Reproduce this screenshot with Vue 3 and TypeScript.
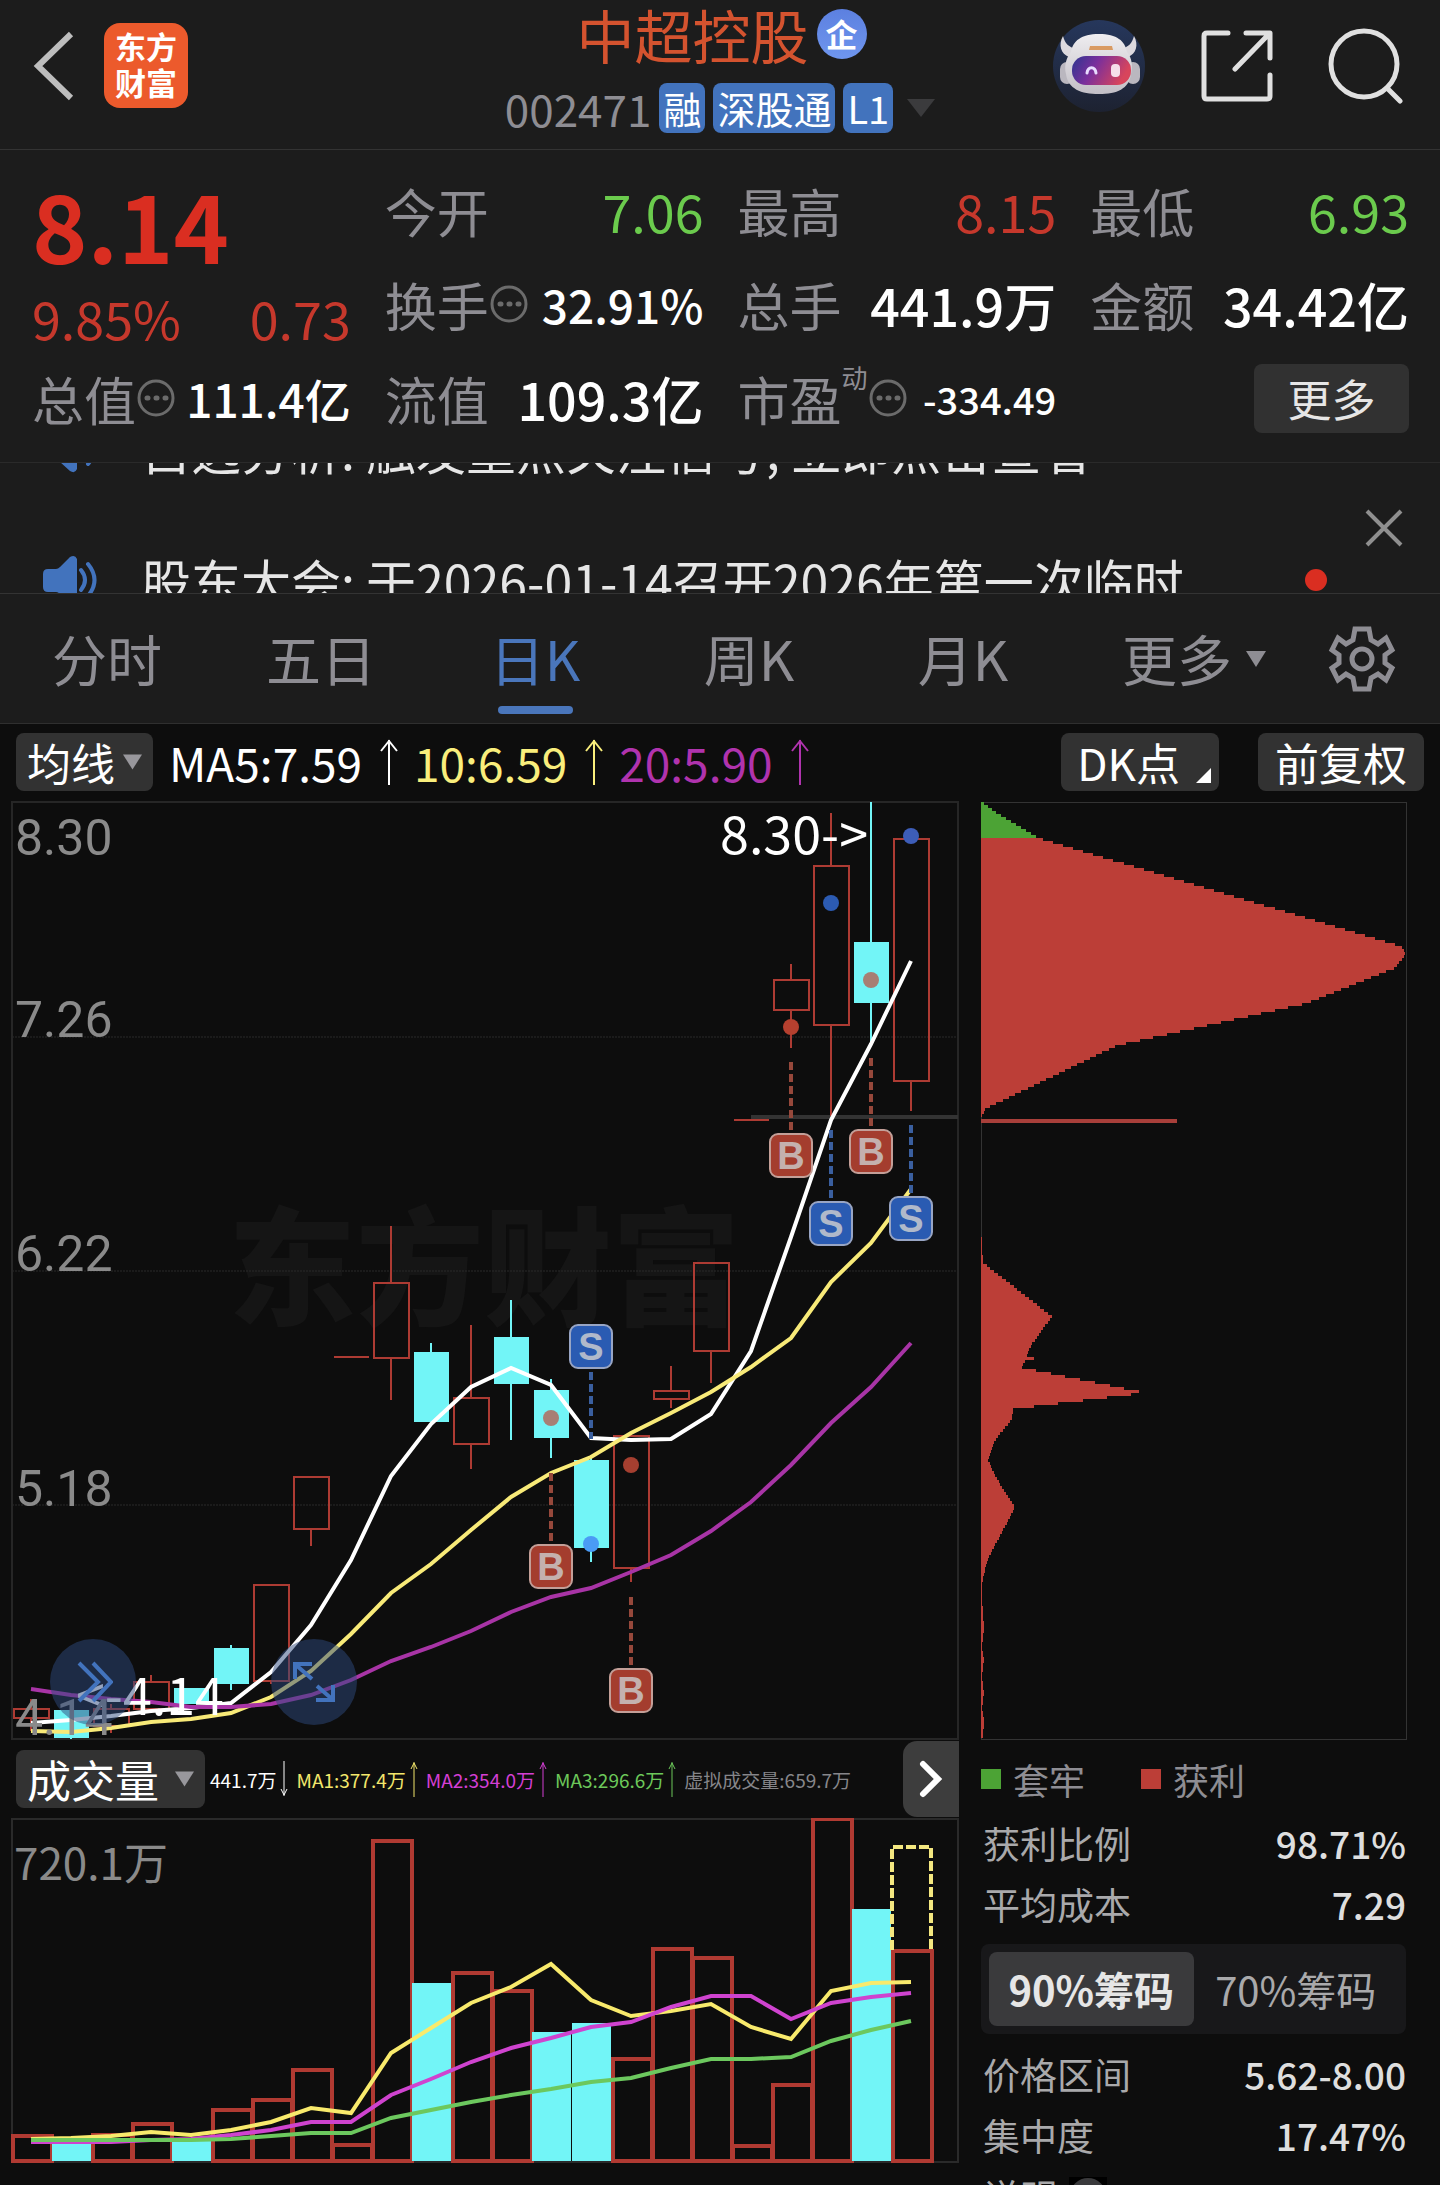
<script setup lang="ts">
import { ref } from 'vue'

interface Candle {
  up: boolean
  top: number
  bottom: number
  high: number
  low: number
}

interface Signal {
  kind: 'B' | 'S'
  index: number
  dot: number
  dotColor: string
  from: number
  to: number
  badge: number
}

const RED = '#ad3b33'
const CYAN = '#72f5f7'

const tabs = ['分时', '五日', '日K', '周K', '月K', '更多']
const activeTab = ref('日K')
const chipRange = ref('90%筹码')

const averages = [
  { text: 'MA5:7.59', color: '#ffffff' },
  { text: '10:6.59', color: '#f9ee7c' },
  { text: '20:5.90', color: '#b033ae' },
]

const volumeStats = [
  { text: '441.7万', color: '#ffffff', dir: 'down' },
  { text: 'MA1:377.4万', color: '#f3e76c', dir: 'up' },
  { text: 'MA2:354.0万', color: '#d43fd4', dir: 'up' },
  { text: 'MA3:296.6万', color: '#6cc85a', dir: 'up' },
  { text: '虚拟成交量:659.7万', color: '#86868a', dir: '' },
]

const costRows = [
  { label: '获利比例', value: '98.71%' },
  { label: '平均成本', value: '7.29' },
]
const rangeRows = [
  { label: '价格区间', value: '5.62-8.00' },
  { label: '集中度', value: '17.47%' },
]

const xAt = (i: number): number => 31 + i * 40

// up, body top, body bottom, high, low
const rawCandles: [number, number, number, number, number][] = [
  [1, 909, 918, 899, 931], [0, 910, 938, 910, 939], [1, 909, 926, 904, 933], [1, 882, 909, 875, 909],
  [0, 888, 904, 888, 904], [0, 848, 884, 845, 890], [1, 785, 881, 785, 884], [1, 677, 729, 677, 746],
  [1, 557, 557, 557, 557], [1, 483, 558, 426, 600], [0, 552, 622, 543, 622], [1, 598, 644, 525, 669],
  [0, 537, 584, 500, 640], [0, 590, 638, 579, 658], [0, 660, 748, 657, 762], [1, 636, 768, 636, 782],
  [1, 591, 599, 566, 608], [1, 463, 551, 463, 583], [1, 320, 320, 320, 320], [1, 180, 210, 164, 248],
  [1, 66, 225, 13, 316], [0, 142, 203, 2, 245], [1, 39, 281, 39, 311],
]
const candles: Candle[] = rawCandles.map(([up, top, bottom, high, low]) => ({ up: up === 1, top, bottom, high, low }))

const toPoints = (ys: number[]): string => ys.map((y, i) => `${xAt(i)},${y}`).join(' ')

const priceLines = [
  { color: '#ffffff', points: toPoints([923, 920, 916, 911, 908, 903, 872, 825, 760, 676, 624, 587, 568, 585, 638, 640, 639, 614, 551, 437, 320, 244, 161]) },
  { color: '#f8ea78', points: toPoints([931, 932, 928, 922, 919, 913, 897, 871, 834, 793, 764, 730, 697, 673, 657, 633, 613, 592, 567, 538, 482, 443, 389]) },
  { color: '#a834a6', points: toPoints([889, 895, 899, 902, 907, 907, 904, 895, 880, 861, 847, 831, 812, 797, 788, 772, 755, 731, 702, 665, 623, 587, 543]) },
]

const signals: Signal[] = [
  { kind: 'B', index: 13, dot: 618, dotColor: '#a77f74', from: 673, to: 741, badge: 744 },
  { kind: 'S', index: 14, dot: 744, dotColor: '#4a9bf5', from: 572, to: 639, badge: 524 },
  { kind: 'B', index: 15, dot: 665, dotColor: '#a53f30', from: 797, to: 865, badge: 868 },
  { kind: 'B', index: 19, dot: 227, dotColor: '#b5402f', from: 262, to: 330, badge: 333 },
  { kind: 'S', index: 20, dot: 103, dotColor: '#2c5bb2', from: 330, to: 398, badge: 401 },
  { kind: 'B', index: 21, dot: 180, dotColor: '#a77f74', from: 258, to: 326, badge: 329 },
  { kind: 'S', index: 22, dot: 36, dotColor: '#3d5db8', from: 325, to: 393, badge: 396 },
]

const axis = [
  { label: '8.30', y: 55 },
  { label: '7.26', y: 237 },
  { label: '6.22', y: 471 },
  { label: '5.18', y: 706 },
  { label: '4.14', y: 935 },
]

const volumeTops = [318, 325, 317, 306, 323, 292, 282, 252, 327, 23, 165, 155, 173, 214, 205, 241, 131, 140, 328, 267, 1, 91, 133]
const volumeFalls = [1, 4, 10, 13, 14, 21]
const volumes = volumeTops.map((top, i) => ({ top, up: !volumeFalls.includes(i), x: xAt(i) }))

const volumeLines = [
  { color: '#f8ea6c', points: toPoints([321, 320, 318, 314, 317, 312, 304, 290, 295, 235, 210, 185, 169, 146, 182, 198, 193, 186, 209, 221, 173, 165, 164]) },
  { color: '#cf43cf', points: toPoints([324, 324, 324, 322, 321, 317, 312, 304, 304, 277, 261, 244, 230, 220, 209, 204, 189, 178, 178, 201, 185, 179, 175]) },
  { color: '#6cc85e', points: toPoints([322, 322, 322, 322, 322, 321, 318, 315, 315, 300, 292, 284, 277, 271, 264, 260, 250, 241, 241, 239, 223, 212, 203]) },
]

// Chip distribution profile: [y, width]
const profile: [number, number][] = [
  [2, 2], [14, 18], [37, 57], [39, 62], [146, 421], [154, 424], [167, 415], [203, 325], [245, 136], [308, 5], [317, 0],
  [430, 0], [462, 2], [463, 3], [516, 71], [545, 50], [555, 46], [556, 53], [559, 53], [560, 44], [567, 41], [569, 50],
  [592, 163], [594, 150], [607, 45], [608, 32], [619, 31], [638, 15], [659, 7], [677, 15], [707, 34], [760, 6], [783, 1],
  [797, 1], [827, 3], [847, 1], [858, 3], [876, 1], [893, 3], [908, 1], [920, 3], [939, 2],
]
const widthAt = (y: number): number => {
  for (let i = 1; i < profile.length; i++) {
    const [y0, w0] = profile[i - 1]
    const [y1, w1] = profile[i]
    if (y <= y1) return w0 + ((w1 - w0) * (y - y0)) / (y1 - y0)
  }
  return 0
}
const chips = Array.from({ length: 312 }, (_, i) => ({ y: 2 + i * 3, w: Math.round(widthAt(3 + i * 3)) })).filter((c) => c.w > 0)
</script>

<template>
  <div class="page">
    <header class="bar">
      <div class="bar-left">
        <button class="icon-btn" aria-label="返回">
          <svg width="42" height="70" viewBox="0 0 42 70"><path d="M38 3 5 35l33 32" fill="none" stroke="#bdbdbd" stroke-width="6" /></svg>
        </button>
        <a class="logo" href="#"><span>东方</span><span>财富</span></a>
      </div>
      <div class="bar-mid">
        <h1>中超控股<span class="ent">企</span></h1>
        <div class="sub">
          <span class="code">002471</span>
          <span class="tag">融</span><span class="tag">深股通</span><span class="tag">L1</span>
          <svg class="drop" width="28" height="18" viewBox="0 0 28 18"><path d="M0 0h28L14 18z" fill="#3b3b3d" /></svg>
        </div>
      </div>
      <div class="bar-right">
        <button class="icon-btn" aria-label="助手">
          <svg width="94" height="94" viewBox="0 0 94 94">
            <defs>
              <linearGradient id="visor" x1="0" y1="0" x2="1" y2="0.3">
                <stop offset="0" stop-color="#2c3590" /><stop offset="0.45" stop-color="#7a2f9c" /><stop offset="1" stop-color="#d8455c" />
              </linearGradient>
              <linearGradient id="shell" x1="0" y1="0" x2="0" y2="1">
                <stop offset="0" stop-color="#efedf0" /><stop offset="1" stop-color="#c2bfc6" />
              </linearGradient>
              <linearGradient id="disc" x1="0" y1="0" x2="0" y2="1">
                <stop offset="0" stop-color="#26375c" /><stop offset="1" stop-color="#1d2231" />
              </linearGradient>
            </defs>
            <circle cx="47" cy="47" r="46" fill="url(#disc)" />
            <path d="M11 17c-5 9-2 18 6 21l7-8c-8-2-11-6-13-13zM82 17c5 9 2 18-6 21l-7-8c8-2 11-6 13-13z" fill="#dcd9de" />
            <rect x="8" y="43" width="14" height="22" rx="7" fill="#bab7bf" /><rect x="74" y="43" width="14" height="22" rx="7" fill="#bab7bf" />
            <path d="M47 15c18 0 26 7 28 18 5 6 6 14 4 22-2 15-14 20-32 20s-31-5-33-20c-2-8 0-16 5-22 2-11 10-18 28-18z" fill="url(#shell)" />
            <path d="M38 27h22l1 4H37z" fill="#d99a62" />
            <rect x="20" y="37" width="59" height="29" rx="14" fill="url(#visor)" />
            <path d="M35 54c1-7 8-7 9 0" fill="none" stroke="#e8dcff" stroke-width="3" stroke-linecap="round" />
            <rect x="59" y="45" width="9" height="13" rx="4" fill="#f6dfea" />
          </svg>
        </button>
        <button class="icon-btn" aria-label="分享">
          <svg width="74" height="74" viewBox="0 0 74 74" fill="none" stroke="#e0e0e0" stroke-width="5" stroke-linejoin="round" stroke-linecap="round">
            <path d="M28 4H7q-3 0-3 3v60q0 3 3 3h60q3 0 3-3V46M46 4h24v25M69 5 35 40" />
          </svg>
        </button>
        <button class="icon-btn" aria-label="搜索">
          <svg width="76" height="76" viewBox="0 0 76 76" fill="none" stroke="#e0e0e0" stroke-width="5" stroke-linecap="round">
            <circle cx="36" cy="36" r="33" /><path d="m59 60 13 13" />
          </svg>
        </button>
      </div>
    </header>

    <section class="quote">
      <div class="price">
        <strong>8.14</strong>
        <div class="change"><span>9.85%</span><span>0.73</span></div>
      </div>
      <div class="cell"><span class="label">今开</span><span class="num green">7.06</span></div>
      <div class="cell"><span class="label">最高</span><span class="num red">8.15</span></div>
      <div class="cell"><span class="label">最低</span><span class="num green">6.93</span></div>
      <div class="cell"><span class="label">换手<svg class="more-dot" viewBox="0 0 38 38"><circle cx="19" cy="19" r="17" /><path d="M10 19h1M19 19h1M28 19h1" /></svg></span><span class="num tight">32.91%</span></div>
      <div class="cell"><span class="label">总手</span><span class="num">441.9万</span></div>
      <div class="cell"><span class="label">金额</span><span class="num">34.42亿</span></div>
      <div class="cell"><span class="label">总值<svg class="more-dot" viewBox="0 0 38 38"><circle cx="19" cy="19" r="17" /><path d="M10 19h1M19 19h1M28 19h1" /></svg></span><span class="num tight">111.4亿</span></div>
      <div class="cell"><span class="label">流值</span><span class="num">109.3亿</span></div>
      <div class="cell"><span class="label">市盈<sup>动</sup><svg class="more-dot" viewBox="0 0 38 38"><circle cx="19" cy="19" r="17" /><path d="M10 19h1M19 19h1M28 19h1" /></svg></span><span class="num small">-334.49</span></div>
      <div class="cell end"><button class="more-btn">更多</button></div>
    </section>

    <section class="notice">
      <div class="ticker">
        <a v-for="(line, i) in ['自选分析: 触发重点关注信号, 立即点击查看', '股东大会: 于2026-01-14召开2026年第一次临时']" :key="line" class="ticker-row" href="#">
          <svg width="56" height="50" viewBox="0 0 56 50">
            <path d="M5 14h8q2 0 4-2L27 2q5-3 7 2v42q-2 5-7 2l-10-9q-2-2-4-2H5q-5 0-5-5V19q0-5 5-5z" fill="#4273bd" />
            <path d="M38 15q8 10 0 20M45 9q13 16 0 32" fill="none" stroke="#4273bd" stroke-width="4" stroke-linecap="round" />
          </svg>
          <span class="ticker-text">{{ line }}</span>
          <i v-if="i === 1" class="unread"></i>
        </a>
      </div>
      <button class="icon-btn close" aria-label="关闭">
        <svg width="38" height="38" viewBox="0 0 38 38"><path d="M2 2l34 34M36 2 2 36" stroke="#8f8f8f" stroke-width="4" /></svg>
      </button>
    </section>

    <nav class="tabs">
      <button v-for="t in tabs" :key="t" class="tab" :class="{ active: t === activeTab, 'has-drop': t === '更多' }" @click="activeTab = t">
        <span>{{ t }}</span>
        <svg v-if="t === '更多'" width="20" height="16" viewBox="0 0 20 16"><path d="M0 0h20L10 16z" fill="#8e8d93" /></svg>
      </button>
      <button class="icon-btn" aria-label="设置">
        <svg width="70" height="70" viewBox="-35 -35 70 70" fill="none" stroke="#8e8d93" stroke-width="5">
          <path d="M-7-30H7l2 11 7 4 8-6 6 12-7 5v8l7 5-6 12-8-6-7 4-2 11H-7l-2-11-7-4-8 6-6-12 7-5v-8l-7-5 6-12 8 6 7-4z" />
          <circle r="10" />
        </svg>
      </button>
    </nav>

    <main class="board">
      <div class="ma-row">
        <button class="pill">均线<svg width="19" height="16" viewBox="0 0 20 16"><path d="M0 0h20L10 16z" fill="#98979c" /></svg></button>
        <span v-for="m in averages" :key="m.text" class="ma" :style="{ color: m.color }">{{ m.text }}<svg width="18" height="46" viewBox="0 0 18 46" fill="none" stroke="currentColor" stroke-width="2"><path d="M9 1v45M1 12 9 2l8 10" /></svg></span>
        <div class="ma-actions">
          <button class="pill dk">DK点<svg width="15" height="15" viewBox="0 0 15 15"><path d="M15 0v15H0z" fill="#fff" /></svg></button>
          <button class="pill">前复权</button>
        </div>
      </div>

      <div class="columns">
        <div class="left">
          <div class="kline">
            <svg viewBox="0 0 960 940" class="chart">
              <text x="228" y="516" class="mark">东方财富</text>
              <path d="M12 237H958M12 471H958M12 705H958" stroke="#2b2b2b" stroke-width="1" stroke-dasharray="2 1" />
              <rect x="12" y="2" width="946" height="937" fill="none" stroke="#262626" stroke-width="2" />
              <path d="M751 317H958" stroke="#333" stroke-width="4" />
              <g v-for="(c, i) in candles" :key="i">
                <template v-if="c.top === c.bottom"><path :d="`M${xAt(i) - 17} ${c.top}h35`" :stroke="RED" stroke-width="2" /></template>
                <template v-else-if="c.up">
                  <path :d="`M${xAt(i)} ${c.high}V${c.top}M${xAt(i)} ${c.bottom}V${c.low}`" :stroke="RED" stroke-width="2" />
                  <rect :x="xAt(i) - 17" :y="c.top" width="35" :height="c.bottom - c.top" fill="none" :stroke="RED" stroke-width="2" />
                </template>
                <template v-else>
                  <path :d="`M${xAt(i)} ${c.high}V${c.low}`" :stroke="CYAN" stroke-width="2" />
                  <rect :x="xAt(i) - 17" :y="c.top" width="35" :height="c.bottom - c.top" :fill="CYAN" />
                </template>
              </g>
              <polyline v-for="l in priceLines" :key="l.color" :points="l.points" fill="none" :stroke="l.color" stroke-width="4" />
              <g v-for="s in signals" :key="s.index">
                <circle :cx="xAt(s.index)" :cy="s.dot" r="8" :fill="s.dotColor" />
                <path :d="`M${xAt(s.index)} ${s.from}V${s.to}`" :stroke="s.kind === 'B' ? '#96483b' : '#3a5f9f'" stroke-width="4" stroke-dasharray="8 4" />
                <rect :x="xAt(s.index) - 21" :y="s.badge + 1" width="42" height="43" rx="8" :fill="s.kind === 'B' ? '#a43d2e' : '#2a5bb2'" :stroke="s.kind === 'B' ? '#c39f98' : '#98a5c4'" stroke-width="2" />
                <text :x="xAt(s.index)" :y="s.badge + 36" class="sig" :fill="s.kind === 'B' ? '#c4b1ae' : '#b0b9ca'">{{ s.kind }}</text>
              </g>
              <text x="868" y="54" class="peak high">8.30-&gt;</text>
              <text x="76" y="915" class="peak">&lt;-4.14</text>
              <text v-for="a in axis" :key="a.label" x="15" :y="a.y" class="axis">{{ a.label }}</text>
            </svg>
            <button class="float fast" aria-label="快进">
              <svg width="40" height="44" viewBox="0 0 40 44" fill="none" stroke="#4273bd" stroke-width="4"><path d="M6 3l19 19L6 41M20 3l18 19-18 19" /></svg>
            </button>
            <button class="float expand" aria-label="全屏">
              <svg width="44" height="44" viewBox="0 0 44 44" fill="none" stroke="#4273bd" stroke-width="4"><path d="M3 19V4h17M4 5l16 14M41 25v15H24M40 39 25 26" /></svg>
            </button>
          </div>

          <div class="vol-head">
            <button class="pill vol">成交量<svg width="19" height="16" viewBox="0 0 20 16"><path d="M0 0h20L10 16z" fill="#98979c" /></svg></button>
            <span v-for="v in volumeStats" :key="v.text" class="stat" :style="{ color: v.color }">{{ v.text }}<svg v-if="v.dir" width="8" height="36" viewBox="0 0 8 36" fill="none" stroke="currentColor" stroke-width="1"><path v-if="v.dir === 'up'" d="M4 1v35M1 8l3-6 3 6" /><path v-else d="M4 0v35M1 28l3 6 3-6" /></svg></span>
            <button class="next" aria-label="下一项">
              <svg width="24" height="38" viewBox="0 0 24 38"><path d="M4 4l15 15L4 34" fill="none" stroke="#fff" stroke-width="6" stroke-linecap="round" /></svg>
            </button>
          </div>

          <svg viewBox="0 0 960 346" class="chart">
            <path d="M12 344V1H958V344z" fill="none" stroke="#2a2a2a" stroke-width="2" />
            <template v-for="v in volumes" :key="v.x">
              <rect v-if="v.up" :x="v.x - 18" :y="v.top" width="39" :height="343 - v.top" fill="none" stroke="#b03a32" stroke-width="4" />
              <rect v-else :x="v.x - 19" :y="v.top" width="39" :height="343 - v.top" :fill="CYAN" />
            </template>
            <path d="M892 132V29H931V132" fill="none" stroke="#f3e780" stroke-width="4" stroke-dasharray="10 3" />
            <polyline v-for="l in volumeLines" :key="l.color" :points="l.points" fill="none" :stroke="l.color" stroke-width="4" />
            <text x="14" y="62" class="vol-axis">720.1万</text>
          </svg>
        </div>

        <aside class="right">
          <svg viewBox="0 0 480 940" class="chart" shape-rendering="crispEdges">
            <rect x="21" y="2" width="425" height="937" fill="none" stroke="#333" stroke-width="1" />
            <rect v-for="c in chips" :key="c.y" x="21" :y="c.y" :width="c.w" height="3" :fill="c.y < 38 ? '#4ca335' : '#bc3e37'" />
            <path d="M21 321h196" stroke="#a83f3a" stroke-width="4" />
          </svg>
          <div class="info">
            <div class="legend"><span><i class="sq g"></i>套牢</span><span><i class="sq r"></i>获利</span></div>
            <dl><div v-for="r in costRows" :key="r.label"><dt>{{ r.label }}</dt><dd>{{ r.value }}</dd></div></dl>
            <div class="seg">
              <button v-for="o in ['90%筹码', '70%筹码']" :key="o" :class="{ on: o === chipRange }" @click="chipRange = o">{{ o }}</button>
            </div>
            <dl>
              <div v-for="r in rangeRows" :key="r.label"><dt>{{ r.label }}</dt><dd>{{ r.value }}</dd></div>
              <div>
                <dt>说明<svg class="help" width="38" height="38" viewBox="0 0 38 38"><rect width="38" height="38" fill="#000" /><circle cx="19" cy="19" r="18" fill="#3a3a3c" /></svg></dt>
                <dd>2026-01-06</dd>
              </div>
            </dl>
          </div>
        </aside>
      </div>
    </main>
  </div>
</template>

<style>
body {
  margin: 0;
  background: #0d0d0d;
}
</style>

<style scoped>
* {
  box-sizing: border-box;
}
.page {
  height: 100vh;
  overflow: hidden;
  background: #1c1c1c;
  color: #fff;
  font-family: "Noto Sans CJK SC", "Noto Sans", sans-serif;
}
button {
  margin: 0;
  padding: 0;
  border: 0;
  background: none;
  color: inherit;
  font: inherit;
  cursor: pointer;
}
a {
  color: inherit;
  text-decoration: none;
}
svg {
  display: block;
  flex: none;
}
.icon-btn {
  display: flex;
  align-items: center;
  justify-content: center;
}

.bar {
  display: grid;
  grid-template-columns: 1fr auto 1fr;
  height: 150px;
  border-bottom: 1px solid #333;
}
.bar-left {
  display: flex;
  align-items: center;
  gap: 29px;
  padding: 0 0 18px 33px;
}
.logo {
  display: flex;
  flex-direction: column;
  align-items: center;
  justify-content: center;
  width: 84px;
  height: 85px;
  padding-bottom: 4px;
  border-radius: 16px;
  background: #ec5a2c;
  font-size: 31px;
  font-weight: 700;
  line-height: 36px;
}
.bar-mid {
  display: flex;
  flex-direction: column;
  align-items: center;
}
h1 {
  display: flex;
  align-items: center;
  gap: 8px;
  margin: 0;
  padding-left: 3px;
  color: #d4532f;
  font-size: 58px;
  font-weight: 400;
  line-height: 68px;
}
.ent {
  width: 50px;
  height: 50px;
  border-radius: 50%;
  background: linear-gradient(#5c80e0, #6f96ee);
  color: #fff;
  font-size: 32px;
  font-weight: 700;
  line-height: 48px;
  text-align: center;
}
.sub {
  display: flex;
  align-items: center;
  gap: 8px;
  height: 80px;
}
.code {
  color: #8e8d93;
  font-size: 44px;
  line-height: 50px;
}
.tag {
  padding: 0 4px;
  border-radius: 8px;
  background: #4273bd;
  font-size: 38px;
  line-height: 50px;
}
.drop {
  margin-left: 6px;
}
.bar-right {
  display: flex;
  align-items: center;
  justify-content: flex-end;
  gap: 54px;
  padding: 0 36px 18px 0;
}

.quote {
  display: grid;
  grid-template-columns: repeat(4, minmax(0, 1fr));
  grid-auto-rows: 94px;
  column-gap: 34px;
  padding: 13px 31px 17px 32px;
}
.price {
  grid-row: span 2;
  color: #c6382c;
}
.price strong {
  display: block;
  color: #da2e21;
  font-size: 94px;
  font-weight: 700;
  line-height: 120px;
}
.change {
  display: flex;
  justify-content: space-between;
  font-size: 52px;
  line-height: 70px;
}
.cell {
  display: flex;
  align-items: center;
  justify-content: space-between;
  white-space: nowrap;
}
.cell.end {
  justify-content: flex-end;
}
.label {
  display: flex;
  align-items: center;
  color: #8e8d93;
  font-size: 52px;
}
.label sup {
  align-self: flex-start;
  font-size: 26px;
  line-height: 32px;
}
.more-dot {
  width: 38px;
  height: 38px;
  margin-left: 1px;
  fill: none;
  stroke: #6b6b6b;
  stroke-width: 3;
  stroke-linecap: round;
}
.more-dot path {
  stroke-width: 5;
}
.num {
  font-size: 52px;
  font-weight: 500;
}
.num.tight {
  font-size: 46px;
}
.num.small {
  font-size: 38px;
}
.green {
  color: #6bcb4d;
  font-weight: 400;
}
.red {
  color: #c6382c;
  font-weight: 400;
}
.more-btn {
  width: 155px;
  height: 69px;
  border-radius: 8px;
  background: #313131;
  color: #e6e6e6;
  font-size: 44px;
}

.notice {
  display: flex;
  height: 132px;
  overflow: hidden;
  border-top: 1px solid #2a2a2a;
  border-bottom: 1px solid #333;
}
.ticker {
  flex: 1;
  min-width: 0;
  margin-top: -81px;
}
.ticker-row {
  display: flex;
  align-items: center;
  gap: 42px;
  height: 132px;
  padding-left: 43px;
  color: #e6e6e6;
  font-size: 50px;
  white-space: nowrap;
}
.ticker-text {
  flex: 1;
}
.unread {
  width: 22px;
  height: 22px;
  border-radius: 50%;
  background: #da2e21;
}
.close {
  width: 113px;
}

.tabs {
  display: grid;
  grid-template-columns: repeat(6, minmax(0, 1fr)) 156px;
  height: 130px;
  border-bottom: 1px solid #2f2f2f;
}
.tab {
  position: relative;
  display: flex;
  align-items: center;
  justify-content: center;
  gap: 14px;
  color: #8e8d93;
  font-size: 55px;
}
.tab span {
  line-height: 74px;
  padding-bottom: 4px;
}
.tab.has-drop {
  padding-left: 34px;
}
.tab.active {
  color: #4a76bb;
}
.tab.active::after {
  position: absolute;
  bottom: 9px;
  width: 75px;
  height: 8px;
  border-radius: 4px;
  background: #4a76bb;
  content: "";
}

.board {
  background: #0d0d0d;
}
.ma-row {
  display: flex;
  align-items: center;
  height: 76px;
  padding: 0 16px;
}
.pill {
  display: flex;
  align-items: center;
  justify-content: center;
  gap: 8px;
  height: 58px;
  padding: 0 11px;
  border-radius: 8px;
  background: #323232;
  font-size: 44px;
  line-height: 58px;
  white-space: nowrap;
}
.ma {
  display: flex;
  align-items: center;
  gap: 18px;
  margin-left: 16px;
  font-size: 46px;
  white-space: nowrap;
}
.ma-actions {
  display: flex;
  gap: 39px;
  margin-left: auto;
}
.ma-actions .pill {
  padding: 0 17px;
}
.pill.dk svg {
  align-self: flex-end;
  margin-bottom: 8px;
}
.ma-actions .dk {
  gap: 16px;
  padding: 0 8px 0 16px;
}
.columns {
  display: grid;
  grid-template-columns: minmax(0, 2fr) minmax(0, 1fr);
}
.chart {
  width: 100%;
  height: auto;
}
.kline {
  position: relative;
}
.mark {
  fill: #151515;
  font-size: 128px;
  font-weight: 900;
}
.sig {
  font: 700 38px "Liberation Sans", sans-serif;
  text-anchor: middle;
}
.peak {
  fill: #fff;
  font-size: 52px;
}
.peak.high {
  text-anchor: end;
}
.axis {
  fill: #8a8a8a;
  font: 50px Roboto, sans-serif;
}
.vol-axis {
  fill: #8a8a8a;
  font-size: 44px;
}
.float {
  position: absolute;
  bottom: 15px;
  display: flex;
  align-items: center;
  justify-content: center;
  width: 86px;
  height: 86px;
  border-radius: 50%;
  background: rgba(45, 74, 125, 0.5);
}
.fast {
  left: 50px;
}
.expand {
  left: 271px;
}
.vol-head {
  display: flex;
  align-items: center;
  height: 78px;
  padding: 0 1px 0 16px;
}
.pill.vol {
  gap: 16px;
  margin-right: 5px;
}
.stat {
  display: flex;
  align-items: center;
  gap: 4px;
  margin-right: 8px;
  font-size: 19px;
  white-space: nowrap;
}
.next {
  display: flex;
  align-items: center;
  justify-content: center;
  width: 56px;
  height: 76px;
  margin-left: auto;
  border-radius: 14px 0 0 14px;
  background: #3d3d3d;
}

.info {
  padding: 6px 34px 0 21px;
}
.legend {
  display: flex;
  gap: 56px;
  height: 66px;
  color: #8e8d93;
  font-size: 36px;
}
.legend span {
  display: flex;
  align-items: center;
  gap: 12px;
}
.sq {
  width: 20px;
  height: 20px;
}
.sq.g {
  background: #4ca335;
}
.sq.r {
  background: #bc3e37;
}
dl {
  margin: 0;
  padding-left: 2px;
}
dl div {
  display: flex;
  align-items: center;
  justify-content: space-between;
  height: 61px;
}
dt {
  display: flex;
  align-items: center;
  color: #a9a9ab;
  font-size: 37px;
}
dd {
  margin: 0;
  color: #dedede;
  font-size: 37px;
  font-weight: 500;
}
.help {
  margin-left: 12px;
}
.seg {
  display: flex;
  height: 90px;
  margin: 10px 0 9px;
  padding: 8px;
  border-radius: 8px;
  background: #18181a;
}
.seg button {
  flex: 1;
  border-radius: 8px;
  color: #a9a9ab;
  font-size: 40px;
}
.seg .on {
  background: #3a3a3c;
  color: #e6e6e6;
  font-weight: 700;
}
</style>
